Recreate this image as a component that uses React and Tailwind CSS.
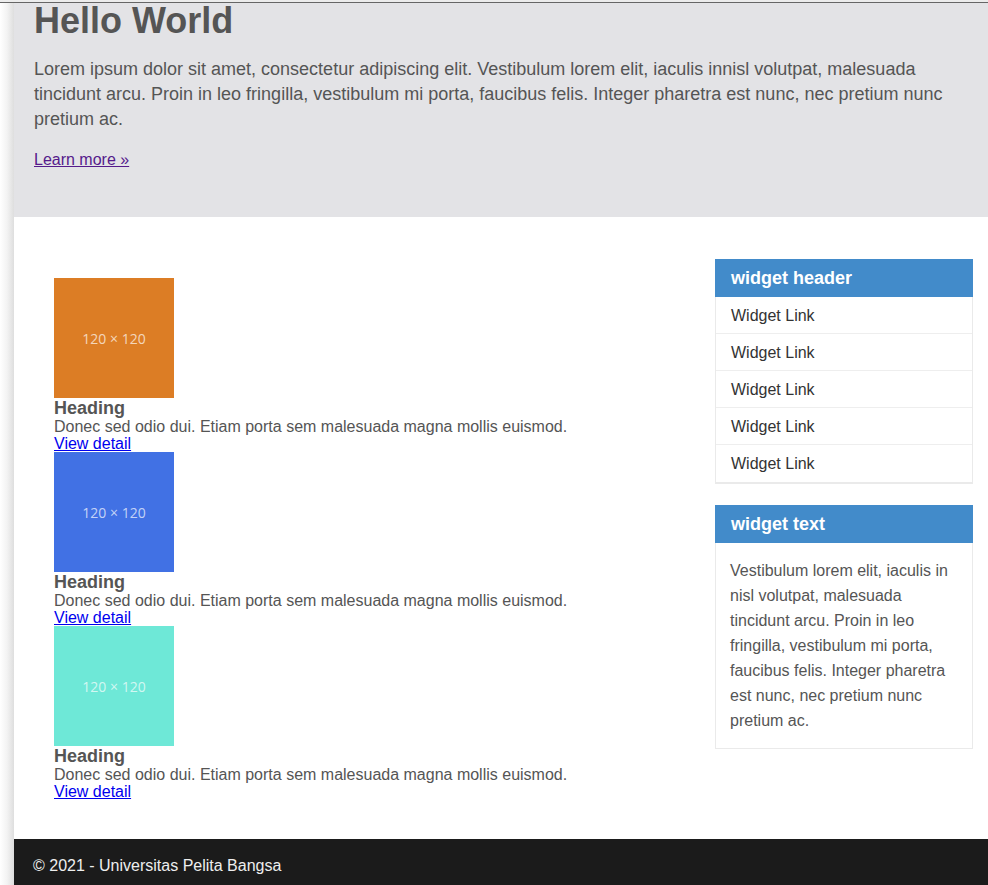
import React from 'react';

const articles = [
  { color: 'bg-[#dc7d25]' },
  { color: 'bg-[#4171e4]' },
  { color: 'bg-[#6ee8d7]' },
];

const Placeholder = ({ color }) => (
  <div
    className={`${color} w-[120px] h-[120px] flex items-center justify-center text-[14px] text-white/70`}
    style={{ fontFamily: '"Open Sans", sans-serif' }}
  >
    120 × 120
  </div>
);

const App = () => {
  return (
    <div className="min-h-[885px] bg-white" style={{ fontFamily: '"Liberation Sans", Arial, sans-serif' }}>
      <div className="h-[2px] bg-[#ececec]" />
      <div className="h-[1px] bg-[#666]" />
      <div className="flex">
        {/* left shadow */}
        <div className="w-[14px] shrink-0 bg-gradient-to-r from-white via-[#f3f3f3] to-[#dedede]" />

        <div className="flex-1 flex flex-col min-w-0">
          {/* Hero */}
          <header className="bg-[#e3e3e6] px-5 pb-[48px]">
            <h1 className="text-[36px] leading-[36px] font-bold text-[#555]">Hello World</h1>
            <p className="mt-[18px] text-[18px] leading-[25px] text-[#555]">
              Lorem ipsum dolor sit amet, consectetur adipiscing elit. Vestibulum lorem elit, iaculis innisl volutpat, malesuada tincidunt arcu. Proin in leo fringilla, vestibulum mi porta, faucibus felis. Integer pharetra est nunc, nec pretium nunc pretium ac.
            </p>
            <p className="mt-[19px] text-[16px] leading-[18px]">
              <a href="#" className="text-[#551a8b] underline">Learn more »</a>
            </p>
          </header>

          {/* Content */}
          <main className="flex justify-between pb-[39px]">
            <section className="pl-[40px] pt-[61px]">
              {articles.map((a, i) => (
                <article key={i}>
                  <Placeholder color={a.color} />
                  <h2 className="text-[18px] leading-[20px] font-bold text-[#555]">Heading</h2>
                  <p className="text-[16px] leading-[17px] text-[#555]">
                    Donec sed odio dui. Etiam porta sem malesuada magna mollis euismod.
                  </p>
                  <a href="#" className="block text-[16px] leading-[17px] text-[#0000ee] underline w-fit">View detail</a>
                </article>
              ))}
            </section>

            <aside className="w-[258px] shrink-0 mr-[15px] mt-[42px]">
              <div>
                <h3 className="bg-[#428bca] h-[38px] px-4 flex items-center text-[18px] font-bold text-white">widget header</h3>
                <ul className="border-x border-b-2 border-[#eaeaea]">
                  {[0, 1, 2, 3, 4].map((i) => (
                    <li key={i} className={`h-[37px] pl-[15px] pt-px flex items-center text-[16px] text-[#333] ${i < 4 ? 'border-b border-[#eeeeee]' : ''}`}>
                      Widget Link
                    </li>
                  ))}
                </ul>
              </div>

              <div className="mt-[21px]">
                <h3 className="bg-[#428bca] h-[38px] px-4 flex items-center text-[18px] font-bold text-white">widget text</h3>
                <div className="border-x border-b border-[#eaeaea] pl-[14px] pr-[15px] pt-[15px] pb-[15px] text-[16px] leading-[25px] text-[#555]">
                  Vestibulum lorem elit, iaculis in nisl volutpat, malesuada tincidunt arcu. Proin in leo fringilla, vestibulum mi porta, faucibus felis. Integer pharetra est nunc, nec pretium nunc pretium ac.
                </div>
              </div>
            </aside>
          </main>

          {/* Footer */}
          <footer className="bg-[#1b1b1b] pl-[19px] pt-[18px] pb-[20px] text-[16px] leading-[18px] text-[#eee]">
            © 2021 - Universitas Pelita Bangsa
          </footer>
        </div>
      </div>
    </div>
  );
};

export default App;
